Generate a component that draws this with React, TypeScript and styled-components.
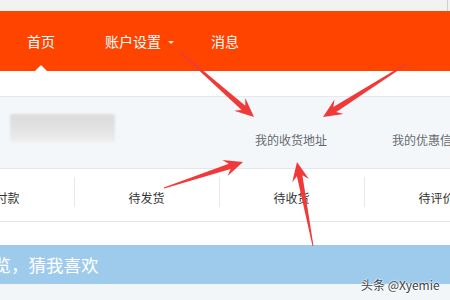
import styled, { createGlobalStyle } from "styled-components";

const GlobalStyle = createGlobalStyle`
  html, body {
    margin: 0;
    padding: 0;
    background: #ffffff;
    overflow: hidden;
  }
  body {
    font-family: "Noto Sans CJK SC", "Microsoft YaHei", sans-serif;
  }
`;

const Page = styled.div`
  position: relative;
  width: 450px;
  height: 300px;
  overflow: hidden;
  background: #fff;
`;

const TopStrip = styled.div`
  height: 11px;
  background: #f2f2f2;
  display: flex;
  justify-content: flex-end;
`;

const StripEdge = styled.div`
  width: 2px;
  height: 100%;
  border-left: 1px solid #d0d0d0;
`;

const NavBar = styled.nav`
  height: 60px;
  background: #ff4400;
  display: flex;
  align-items: center;
  gap: 50px;
  padding-left: 27px;
`;

const NavItem = styled.div<{ $active?: boolean }>`
  position: relative;
  height: 60px;
  display: flex;
  align-items: center;
  color: #fff;
  font-size: 14px;
  line-height: 1;

  &::after {
    content: "";
    display: ${(p) => (p.$active ? "block" : "none")};
    position: absolute;
    bottom: 0;
    left: 50%;
    margin-left: -6px;
    border-left: 6px solid transparent;
    border-right: 6px solid transparent;
    border-bottom: 6px solid #fff;
  }
`;

const Caret = styled.span`
  position: absolute;
  right: -13px;
  top: 30px;
  border-left: 3px solid transparent;
  border-right: 3px solid transparent;
  border-top: 3px solid rgba(255, 255, 255, 0.85);
`;

const Spacer = styled.div`
  height: 25px;
  border-bottom: 1px solid #e6eaee;
`;

const InfoPanel = styled.div`
  height: 71px;
  background: #f4f7fa;
  border-bottom: 1px solid #e3e6ea;
  display: flex;
  align-items: center;
  padding-left: 10px;
`;

const BlurName = styled.div`
  flex: 0 0 105px;
  height: 28px;
  margin-top: -10px;
  margin-right: 140px;
  border-radius: 2px;
  background: linear-gradient(180deg, #dcdcdc 0%, #e3e3e3 55%, #eeeeee 100%);
  filter: blur(1px);
`;

const PanelLinks = styled.div`
  display: flex;
  gap: 65px;
  margin-top: 14px;
`;

const PanelLink = styled.span`
  font-size: 12px;
  color: #666a70;
  white-space: nowrap;
`;

const OrderRow = styled.div`
  height: 52px;
  display: flex;
  margin-left: -71px;
  border-bottom: 1px solid #e5e5e5;
`;

const OrderCell = styled.div<{ $divider?: boolean }>`
  flex: 0 0 145px;
  display: flex;
  align-items: center;
  justify-content: center;
  font-size: 12px;
  color: #333;
  position: relative;
  padding-top: 4px;

  &::before {
    content: "";
    display: ${(p) => (p.$divider ? "block" : "none")};
    position: absolute;
    left: 0;
    top: 8px;
    bottom: 14px;
    border-left: 1px solid #e8e8e8;
  }
`;

const Gap = styled.div`
  height: 23px;
`;

const Banner = styled.div`
  height: 39px;
  background: #9ecbeb;
  display: flex;
  align-items: center;
  margin-left: -24px;
  color: #fff;
  font-size: 17.5px;
  white-space: nowrap;
`;

const Footer = styled.div`
  height: 16px;
  background: #f3f6f9;
`;

const Watermark = styled.div`
  position: absolute;
  left: 361px;
  top: 276px;
  font-family: "Noto Sans CJK SC", "Liberation Sans", sans-serif;
  font-size: 12px;
  color: #3e4246;
  text-shadow: 0 0 2px #fff, 0 0 2px #fff;
  white-space: nowrap;
`;

const Overlay = styled.svg`
  position: absolute;
  left: 0;
  top: 0;
  pointer-events: none;
`;

type Arrow = { x1: number; y1: number; x2: number; y2: number };

const arrows: Arrow[] = [
  { x1: 180, y1: 52, x2: 254, y2: 117 },
  { x1: 408, y1: 63, x2: 323, y2: 117 },
  { x1: 164, y1: 188, x2: 243, y2: 162 },
  { x1: 313, y1: 246, x2: 297, y2: 162 },
];

function arrowPoints({ x1, y1, x2, y2 }: Arrow) {
  const dx = x2 - x1;
  const dy = y2 - y1;
  const len = Math.hypot(dx, dy);
  const ux = dx / len;
  const uy = dy / len;
  const nx = -uy;
  const ny = ux;
  const head = 19;
  const half = 8.5;
  const neck = 14;
  const shaft = 2.8;
  const bx = x2 - ux * head;
  const by = y2 - uy * head;
  const sx = x2 - ux * neck;
  const sy = y2 - uy * neck;
  const pts = [
    [x1 + nx * 0.5, y1 + ny * 0.5],
    [sx + nx * shaft, sy + ny * shaft],
    [bx + nx * half, by + ny * half],
    [x2, y2],
    [bx - nx * half, by - ny * half],
    [sx - nx * shaft, sy - ny * shaft],
    [x1 - nx * 0.5, y1 - ny * 0.5],
  ];
  return pts.map((p) => `${p[0].toFixed(1)},${p[1].toFixed(1)}`).join(" ");
}

const orders = ["待付款", "待发货", "待收货", "待评价"];

export default function App() {
  return (
    <Page>
      <GlobalStyle />
      <TopStrip>
        <StripEdge />
      </TopStrip>
      <NavBar>
        <NavItem $active>首页</NavItem>
        <NavItem>
          账户设置
          <Caret />
        </NavItem>
        <NavItem>消息</NavItem>
      </NavBar>
      <Spacer />
      <InfoPanel>
        <BlurName />
        <PanelLinks>
          <PanelLink>我的收货地址</PanelLink>
          <PanelLink>我的优惠信息</PanelLink>
        </PanelLinks>
      </InfoPanel>
      <OrderRow>
        {orders.map((o, i) => (
          <OrderCell key={o} $divider={i > 0}>
            {o}
          </OrderCell>
        ))}
      </OrderRow>
      <Gap />
      <Banner>浏览，猜我喜欢</Banner>
      <Footer />
      <Watermark>头条 @Xyemie</Watermark>
      <Overlay width={450} height={300} viewBox="0 0 450 300">
        {arrows.map((a, i) => (
          <polygon key={i} points={arrowPoints(a)} fill="#f03a3a" />
        ))}
      </Overlay>
    </Page>
  );
}
